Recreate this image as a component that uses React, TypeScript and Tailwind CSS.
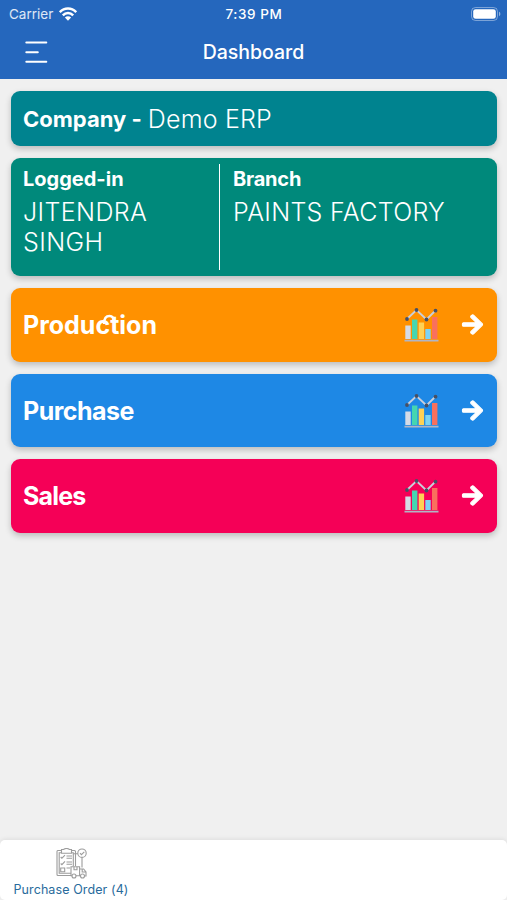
import type { ReactNode } from "react";
import clsx from "clsx";
import { FaArrowRight } from "react-icons/fa";

interface Module {
  title: string;
  color: string;
  tracking: string;
  ligature?: boolean;
}

const modules: Module[] = [
  { title: "Production", color: "bg-[#ff9100]", tracking: "tracking-normal", ligature: true },
  { title: "Purchase", color: "bg-[#1e88e5]", tracking: "tracking-[-0.5px]" },
  { title: "Sales", color: "bg-[#f50057]", tracking: "tracking-[-0.8px]" },
];

function WifiIcon() {
  return (
    <svg width="18" height="14" viewBox="0 0 18 14" fill="none" stroke="white" strokeWidth="2.5">
      <path d="M0.8 5.2C5.4 0.4 12.6 0.4 17.2 5.2" />
      <path d="M3.8 8.3C6.8 5.3 11.2 5.3 14.2 8.3" />
      <path d="M9 13.8 5.9 10.5C7.8 8.9 10.2 8.9 12.1 10.5Z" fill="white" stroke="none" />
    </svg>
  );
}

function BatteryIcon() {
  return (
    <svg width="30" height="14" viewBox="0 0 30 14" fill="none">
      <rect x="0.5" y="0.5" width="26" height="13" rx="4" stroke="white" strokeOpacity="0.4" />
      <rect x="2.2" y="2.2" width="22.6" height="9.6" rx="2.4" fill="white" />
      <path d="M28 4.8C29.8 5.4 29.8 8.6 28 9.2Z" fill="white" fillOpacity="0.5" />
    </svg>
  );
}

function ChartIcon() {
  return (
    <svg width="35" height="35" viewBox="0 0 35 35" fill="none">
      <path d="M3 12 12.5 3 22.5 12.5 31.5 3.5" stroke="#c9cfdb" strokeWidth="1.8" />
      <g fill="#465065">
        <circle cx="3" cy="12" r="1.9" />
        <circle cx="12.5" cy="3" r="1.9" />
        <circle cx="22.5" cy="12.5" r="1.9" />
        <circle cx="31.5" cy="3.7" r="1.9" />
      </g>
      <path d="M1.3 18.5h5.4V32H1.3z" fill="#d5dbe6" />
      <path d="M8 12.5h5.4V32H8z" fill="#45d6b0" />
      <path d="M14.7 15.5h5.4V32h-5.4z" fill="#ffd155" />
      <path d="M21.3 22h5.4v10h-5.4z" fill="#7cd3f4" />
      <path d="M28 10h5.4v22H28z" fill="#f9705d" />
      <path d="M0.5 33.6h34" stroke="#b1b5c5" strokeWidth="1.8" />
    </svg>
  );
}

function PurchaseOrderIcon() {
  return (
    <svg width="31" height="31" viewBox="0 0 31 31" fill="none" stroke="#9c9c9c" strokeWidth="1.1">
      <path d="M5 2.5H1.8Q1 2.5 1 3.5v23q0 1 1 1h13M16 2.5h2.5q1 0 1 1V18" />
      <path d="M5 4.8H3.2v20.5H15M16 4.8h1.3v13.5" />
      <path d="M5.5 1.5h2q3-2 6 0h2v3.8h-10z" />
      <path d="m4.7 9 1.2 1.2L9 7.2M4.7 15.5l1.2 1.2L9 13.3M10.5 8h5.5M10.5 10.3h5.5M10.5 14h5.5M10.5 16.3h5.5M4.7 20h4v3.8h-4zM10.5 20H14" />
      <circle cx="26" cy="5.2" r="4.2" />
      <path d="m24 5.2 1.4 1.5L28.3 3.8M26 9.4v10M17.3 5.8h4.5" />
      <path d="M15 18.8h8.6v9H15zM18 18.8v3h3v-3M23.6 21h4l2.4 3v4h-6.4M26.2 21v3H30" />
      <circle cx="18" cy="28" r="2" fill="white" />
      <circle cx="26.5" cy="28" r="2" fill="white" />
    </svg>
  );
}

function Card({ className, children }: { className?: string; children: ReactNode }) {
  return (
    <section
      className={clsx(
        "flex shrink-0 rounded-[9px] px-[12.5px] text-white shadow-[0_3px_6px_rgba(0,0,0,0.22)]",
        className
      )}
    >
      {children}
    </section>
  );
}

export default function App() {
  return (
    <div className="flex h-[900px] w-full flex-col bg-[#f0f0f0] font-['Inter','Liberation_Sans',sans-serif]">
      <header className="h-[79px] shrink-0 bg-[#2567bd] text-white">
        <div className="grid h-[27px] grid-cols-3 items-center pr-[6px] pl-[9px] text-[13.5px]">
          <div className="flex items-center gap-[6px] text-white/85">
            <span className="pt-px">Carrier</span>
            <WifiIcon />
          </div>
          <span className="pt-px pr-[2px] text-center font-medium tracking-[0.6px]">7:39 PM</span>
          <div className="flex justify-end">
            <BatteryIcon />
          </div>
        </div>
        <div className="grid h-[51px] grid-cols-[60px_1fr_60px] items-center">
          <button className="pl-[25px]" aria-label="Menu">
            <svg width="23" height="23" viewBox="0 0 23 23" stroke="white" strokeWidth="2" strokeLinecap="round">
              <path d="M1.3 1.5h20M1.3 11.2h11.5M1.3 20.8h20" />
            </svg>
          </button>
          <h1 className="pt-px text-center text-[19.5px] font-medium">Dashboard</h1>
        </div>
      </header>

      <main className="flex flex-1 flex-col gap-3 px-[10.5px] pt-3">
        <Card className="h-[55px] items-center bg-[#00838f]">
          <span className="text-[22px] leading-7 font-bold">Company -</span>
          <span className="ml-[6px] pt-px text-[25px] leading-7 font-light tracking-[0.2px]">Demo ERP</span>
        </Card>

        <Card className="h-[118px] bg-[#00897b] py-[6px]">
          <div className="w-[197px] border-r border-white">
            <h2 className="pt-px text-[20px] leading-[29px] font-bold">Logged-in</h2>
            <p className="mt-[3px] w-[150px] text-[25px] leading-[30px] font-light tracking-[0.4px]">JITENDRA SINGH</p>
          </div>
          <div className="flex-1 pl-[13px]">
            <h2 className="pt-px text-[20px] leading-[29px] font-bold tracking-[-0.2px]">Branch</h2>
            <p className="mt-[3px] text-[25px] leading-[30px] font-light tracking-[0.3px]">PAINTS FACTORY</p>
          </div>
        </Card>

        {modules.map((item) => (
          <Card key={item.title} className={clsx("h-[73.5px] items-center", item.color)}>
            <div className="flex-1 pt-[2px]">
              <h2 className={clsx("relative w-fit text-[25px] font-bold", item.tracking)}>
                {item.title}
                {/* swash joining the c and the t */}
                {item.ligature && (
                  <svg className="absolute top-[7px] left-[79px]" width="15" height="12" viewBox="0 0 15 12" fill="none">
                    <path d="M2 10C2 4 4.5 2 7.5 2S12 4 12 8" stroke="white" strokeWidth="2.4" />
                  </svg>
                )}
              </h2>
            </div>
            <ChartIcon />
            <FaArrowRight className="ml-[22px] size-[23px]" stroke="currentColor" strokeWidth="24" />
          </Card>
        ))}
      </main>

      <footer className="h-[60px] shrink-0 rounded-[5px] bg-white shadow-[0_-1px_4px_rgba(0,0,0,0.08)]">
        <button className="flex w-[142px] flex-col items-center pt-[8px] text-[#286b9c]">
          <PurchaseOrderIcon />
          <span className="mt-[2px] text-[12.5px] leading-[18px] tracking-[0.1px]">Purchase Order (4)</span>
        </button>
      </footer>
    </div>
  );
}
